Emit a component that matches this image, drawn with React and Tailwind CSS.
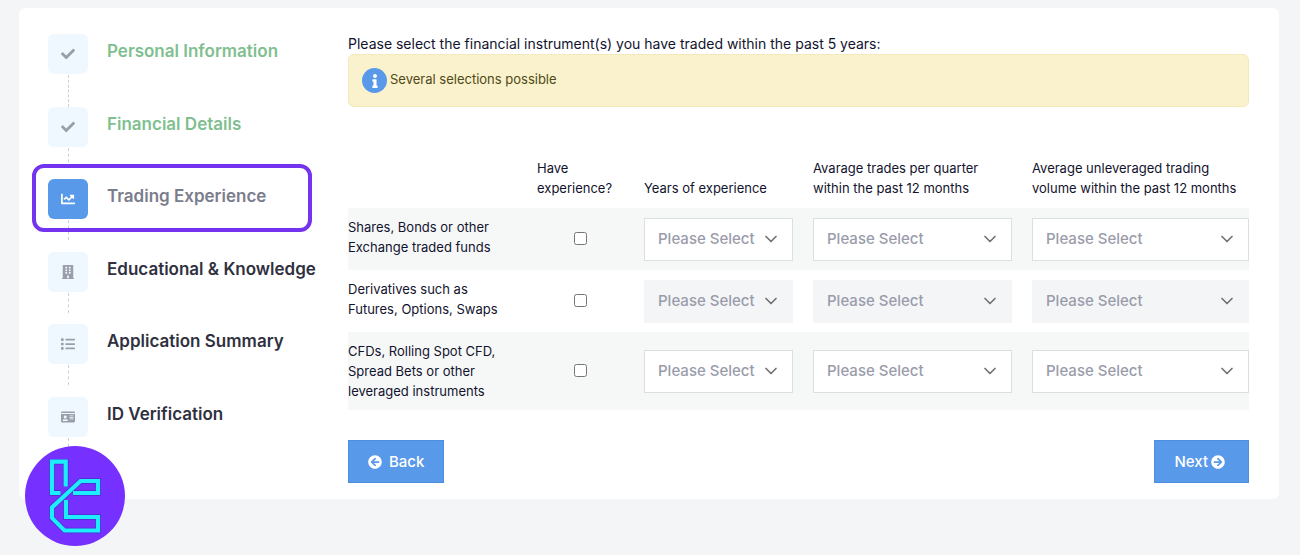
import React, { useState } from 'react';
import clsx from 'clsx';
import { ChevronDown } from 'lucide-react';
import {
  FaArrowCircleLeft,
  FaArrowCircleRight,
  FaBuilding,
  FaChartLine,
  FaCheck,
  FaIdCard,
  FaInfo,
  FaList,
} from 'react-icons/fa';

const steps = [
  { label: 'Personal Information', icon: FaCheck, status: 'done' },
  { label: 'Financial Details', icon: FaCheck, status: 'done' },
  { label: 'Trading Experience', icon: FaChartLine, status: 'current' },
  { label: 'Educational & Knowledge', icon: FaBuilding, status: 'pending' },
  { label: 'Application Summary', icon: FaList, status: 'pending' },
  { label: 'ID Verification', icon: FaIdCard, status: 'pending' },
];

const instruments = [
  { id: 'shares', lines: ['Shares, Bonds or other', 'Exchange traded funds'] },
  { id: 'derivatives', lines: ['Derivatives such as', 'Futures, Options, Swaps'], disabled: true },
  { id: 'cfds', lines: ['CFDs, Rolling Spot CFD,', 'Spread Bets or other', 'leveraged instruments'] },
];

const fields = [
  { id: 'years', lines: ['Years of experience'], options: ['0-1', '1-3', '3+'] },
  {
    id: 'trades',
    lines: ['Avarage trades per quarter', 'within the past 12 months'],
    options: ['0-10', '10-50', '50+'],
  },
  {
    id: 'volume',
    lines: ['Average unleveraged trading', 'volume within the past 12 months'],
    options: ['0-10,000', '10,000-50,000', '50,000+'],
  },
];

const Lines = ({ lines }) =>
  lines.map((line) => (
    <span key={line} className="block whitespace-nowrap">
      {line}
    </span>
  ));

const Step = ({ step, first }) => {
  const Icon = step.icon;
  const current = step.status === 'current';

  return (
    <li className="relative flex flex-1 gap-[19px]" aria-current={current ? 'step' : undefined}>
      {current && (
        <div className="pointer-events-none absolute -left-4 -top-[15px] h-[68px] w-[280px] rounded-xl border-4 border-[#7433ee]" />
      )}
      <div className="flex w-10 shrink-0 flex-col items-center">
        <div
          className={clsx(
            'flex size-10 shrink-0 items-center justify-center rounded-md',
            current ? 'bg-[#5899ea] text-white' : 'bg-[#f0f8ff] text-[#9a9eaa]'
          )}
        >
          <Icon className="size-[14px]" />
        </div>
        <div
          className={clsx(
            'mt-px w-px border-l border-dashed border-[#cdced6]',
            first ? 'flex-1' : 'h-5'
          )}
        />
      </div>
      <span
        className={clsx(
          'whitespace-nowrap text-[17px] font-semibold leading-[34px]',
          step.status === 'done' && 'text-[#7fbf8f]',
          current && 'text-[#7b7d8c]',
          step.status === 'pending' && 'text-[#30313f]'
        )}
      >
        {step.label}
      </span>
    </li>
  );
};

const SelectField = ({ label, options, disabled }) => (
  <div className="relative">
    <select
      aria-label={label}
      disabled={disabled}
      defaultValue=""
      className={clsx(
        'block h-[43px] w-full appearance-none border pl-[13px] pr-9 text-[15px] font-medium text-[#9a9cab] opacity-100 focus:outline-none',
        disabled ? 'border-[#f3f5f7] bg-[#f3f5f7]' : 'border-[#dcdfe1] bg-white'
      )}
    >
      <option value="">Please Select</option>
      {options.map((option) => (
        <option key={option}>{option}</option>
      ))}
    </select>
    <ChevronDown
      className="pointer-events-none absolute inset-y-0 right-3 my-auto size-5 text-[#6f7175]"
      strokeWidth={2}
    />
  </div>
);

const BrandBadge = () => (
  <svg
    viewBox="0 0 100 100"
    className="absolute left-[25px] top-[446px] size-[100px]"
    role="img"
    aria-label="Brand"
  >
    <circle cx="50" cy="50" r="50" fill="#7630ff" />
    <g fill="none" strokeLinejoin="miter">
      <g stroke="#4a2fc8" strokeWidth="5.6">
        <path d="M40.7 40.5V15.7H27V47H35.5" />
        <path d="M48 47H73V35H55.5L27 61.5V72L39.5 84.5H73V71H41V54" />
      </g>
      <g stroke="#1ceeff" strokeWidth="4.2">
        <path d="M40.7 40.5V15.7H27V47H35.5" />
        <path d="M48 47H73V35H55.5L27 61.5V72L39.5 84.5H73V71H41V54" />
      </g>
    </g>
  </svg>
);

const App = () => {
  const [selected, setSelected] = useState({});

  const toggle = (id) => {
    setSelected((prev) => ({ ...prev, [id]: !prev[id] }));
  };

  return (
    <div className="relative min-h-screen bg-[#f3f5f7] pl-[19px] pr-[21px] pt-2 font-['Inter',sans-serif] text-[13px] leading-5 text-[#12132d]">
      <main className="flex rounded-md bg-white pb-4 pl-[29px] pr-[30px] pt-[26px]">
        <ol className="flex w-[300px] shrink-0 flex-col pb-[14px]">
          {steps.map((step, index) => (
            <Step key={step.label} step={step} first={index === 0} />
          ))}
        </ol>

        <form className="min-w-0 flex-1" onSubmit={(e) => e.preventDefault()}>
          <p className="text-[14px] leading-5">
            Please select the financial instrument(s) you have traded within the past 5 years:
          </p>
          <div className="flex h-[53px] items-center gap-[3px] rounded-md border border-[#f4e9b8] bg-[#faf1cd] px-[13px] text-[#4f4a17]">
            <span className="flex size-[25px] items-center justify-center rounded-full bg-[#5899ea] text-white">
              <FaInfo className="size-[14px]" />
            </span>
            <span className="pb-[3px]">Several selections possible</span>
          </div>

          <table className="mt-[51px] w-full table-fixed text-left">
            <colgroup>
              <col className="w-[179px]" />
              <col className="w-[107px]" />
              <col className="w-[169px]" />
              <col className="w-[219px]" />
              <col />
            </colgroup>
            <thead>
              <tr className="align-bottom">
                <td />
                <th scope="col" className="px-[10px] pb-[10px] font-normal">
                  <Lines lines={['Have', 'experience?']} />
                </th>
                {fields.map((field) => (
                  <th
                    key={field.id}
                    scope="col"
                    className="px-[10px] pb-[10px] font-normal last:pr-0"
                  >
                    <Lines lines={field.lines} />
                  </th>
                ))}
              </tr>
            </thead>
            <tbody>
              {instruments.map((item) => (
                <tr key={item.id} className="h-[62px] odd:bg-[#f6f8f8]">
                  <th scope="row" className="py-[9px] align-top font-normal">
                    <label htmlFor={item.id}>
                      <Lines lines={item.lines} />
                    </label>
                  </th>
                  <td className="pb-1 text-center">
                    <input
                      id={item.id}
                      type="checkbox"
                      className="size-[13px] align-middle"
                      checked={!!selected[item.id]}
                      onChange={() => toggle(item.id)}
                    />
                  </td>
                  {fields.map((field) => (
                    <td key={field.id} className="px-[10px] last:pr-0">
                      <SelectField
                        label={`${field.lines.join(' ')}: ${item.lines.join(' ')}`}
                        options={field.options}
                        disabled={item.disabled && !selected[item.id]}
                      />
                    </td>
                  ))}
                </tr>
              ))}
            </tbody>
          </table>

          <div className="mt-[30px] flex justify-between text-[15px] font-medium text-white">
            <button
              type="button"
              className="flex h-[43px] items-center gap-[7px] border border-[#4d8edf] bg-[#5899ea] px-[19px]"
            >
              <FaArrowCircleLeft className="size-[14px]" />
              Back
            </button>
            <button
              type="submit"
              className="flex h-[43px] items-center gap-[3px] border border-[#4d8edf] bg-[#5899ea] pl-[19px] pr-[23px]"
            >
              Next
              <FaArrowCircleRight className="size-[14px]" />
            </button>
          </div>
        </form>
      </main>
      <BrandBadge />
    </div>
  );
};

export default App;
